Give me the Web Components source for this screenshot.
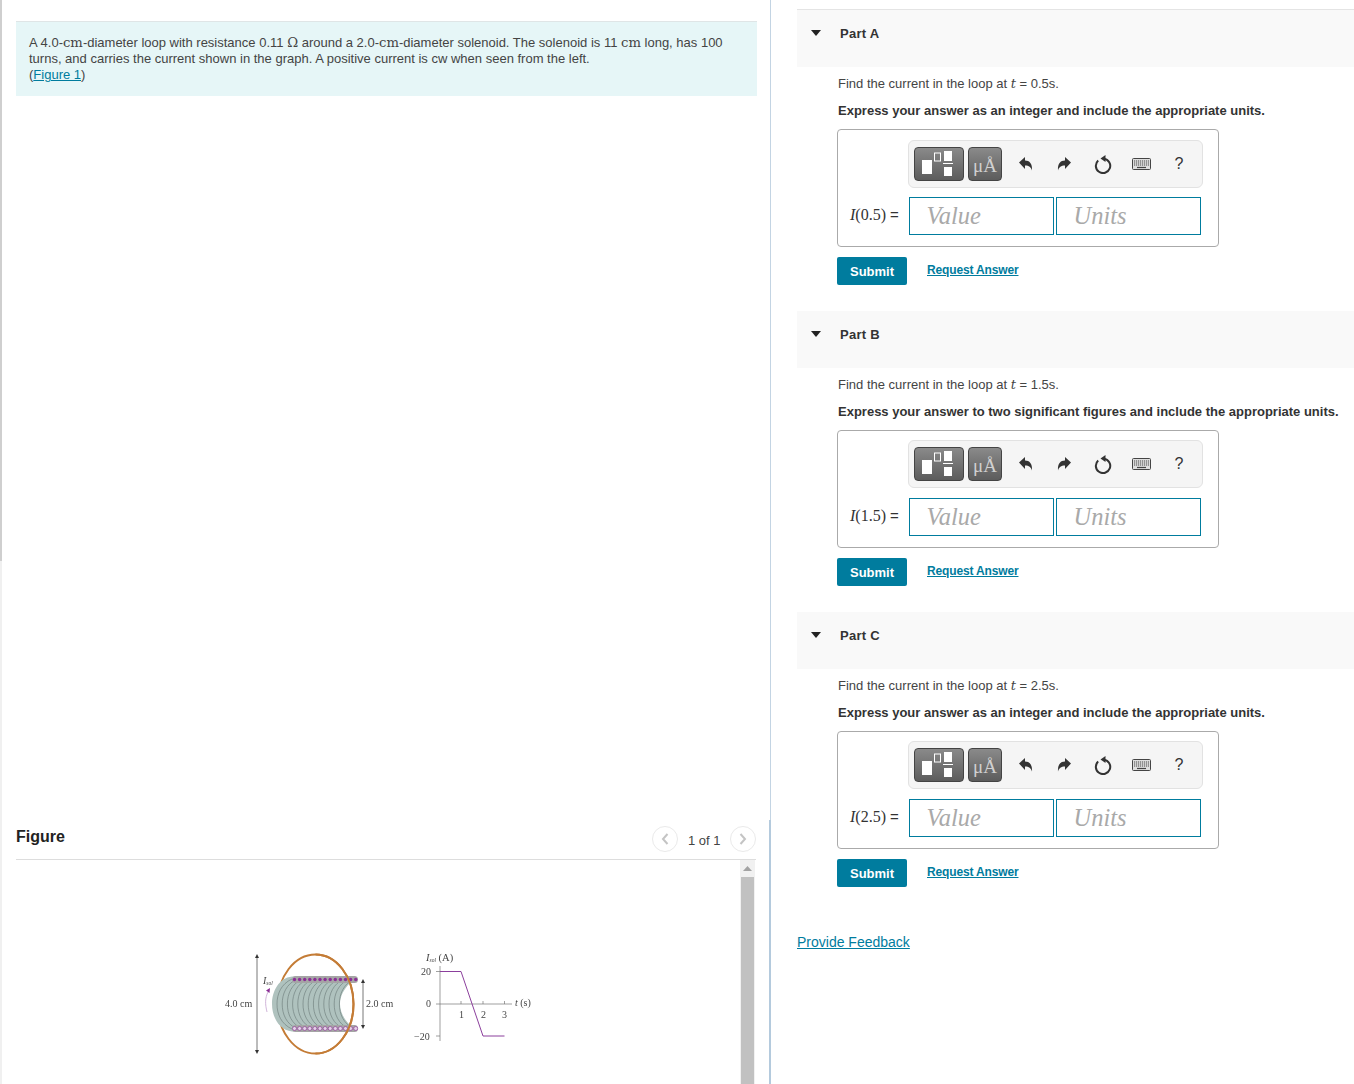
<!DOCTYPE html>
<html lang="en">
<head>
<meta charset="utf-8">
<title>Part A</title>
<style>
  html, body { margin: 0; height: 100%; }
  body { font-family: "Liberation Sans", Arial, sans-serif; color: #333; background: #fff; overflow: hidden; }
</style>
</head>
<body>
<mp-app>
  <mp-intro slot="left">A 4.0-<mp-m>cm</mp-m>-diameter loop with resistance 0.11 <mp-m>Ω</mp-m> around a 2.0-<mp-m>cm</mp-m>-diameter solenoid. The solenoid is 11 <mp-m>cm</mp-m> long, has 100<br>turns, and carries the current shown in the graph. A positive current is cw when seen from the left.</mp-intro>
  <mp-figure slot="left"></mp-figure>
  <mp-part slot="right" first label="Part A" time="0.5" instruction="Express your answer as an integer and include the appropriate units."></mp-part>
  <mp-part slot="right" label="Part B" time="1.5" instruction="Express your answer to two significant figures and include the appropriate units."></mp-part>
  <mp-part slot="right" label="Part C" time="2.5" instruction="Express your answer as an integer and include the appropriate units."></mp-part>
  <a slot="right" href="#" style="display:block;width:max-content;margin-top:21px;font-size:14px;line-height:18px;color:#007c9e">Provide Feedback</a>
</mp-app>
<script>
const TEAL = "#007c9e";

function define(tag, html, setup) {
  const template = document.createElement("template");
  template.innerHTML = html.trim();
  customElements.define(tag, class extends HTMLElement {
    constructor() {
      super();
      this.attachShadow({ mode: "open" }).append(template.content.cloneNode(true));
      if (setup) setup(this, this.shadowRoot);
    }
  });
}

define("mp-app", `
  <style>
    :host { display: flex; height: 100vh; box-sizing: border-box; overflow: hidden; }
    .left {
      box-sizing: border-box; width: 771px; flex: none; height: 100%;
      display: flex; flex-direction: column;
      padding: 21px 13px 0 16px;
      border-right: 1px solid #c3d4e3;
      position: relative;
    }
    .left::before { content: ""; position: absolute; left: 0; top: 0; bottom: 0; width: 2px; background: linear-gradient(#cfcfcf 561px, #f0f0f0 561px); }
    .left::after { content: ""; position: absolute; right: -1px; top: 820px; bottom: 0; width: 2px; background: #b4cadd; }
    .right { flex: 1; min-width: 0; padding: 9px 0 0 26px; }
  </style>
  <div class="left"><slot name="left"></slot></div>
  <div class="right"><slot name="right"></slot></div>
`);

define("mp-m", `
  <style>:host { display: inline; font-family: "DejaVu Serif", serif; font-size: 13.2px; }</style><slot></slot>
`);

define("mp-intro", `
  <style>
    :host {
      display: block; flex: none; box-sizing: border-box; height: 75px; width: 741px;
      padding: 13px 13px 0; background: #e6f6f7; border-top: 1px solid #dfe5e6;
      font-size: 13px; line-height: 16px; color: #444;
    }
    a { color: ${TEAL}; }
    div { width: 705px; }
  </style>
  <div><slot></slot><br>(<a href="#">Figure 1</a>)</div>
`);

define("mp-figure", `
  <style>
    :host { display: flex; flex-direction: column; margin-top: auto; flex: none; height: 263px; }
    header { display: flex; align-items: center; height: 38px; border-bottom: 1px solid #ddd; flex: none; width: 740px; }
    h2 { margin: 0; font-size: 16px; line-height: 20px; font-weight: bold; color: #222; flex: 1; position: relative; top: -3px; }
    .nav { display: flex; align-items: center; gap: 9.500px; position: relative; top: -1px; }
    .nav span { font-size: 13px; color: #444; position: relative; top: 1px; }
    button {
      box-sizing: border-box; width: 26px; height: 26px; border-radius: 50%; padding: 0; margin: 0;
      border: 1.5px solid #eaeaea; background: #fff; display: grid; place-items: center;
    }
    .view { flex: 1; display: flex; width: 739px; min-height: 0; }
    .canvas { flex: 1; position: relative; }
    .bar { width: 15px; background: #f1f1f1; display: flex; flex-direction: column; align-items: center; }
    .up { height: 17px; flex: none; display: grid; place-items: center; }
    .thumb { flex: 1; width: 13px; background: #c1c1c1; }
    svg.fig { position: absolute; left: 194px; top: 80px; filter: blur(.25px); }
    svg text { font-family: "Liberation Serif", serif; fill: #444; }
  </style>
  <header>
    <h2>Figure</h2>
    <div class="nav">
      <button aria-label="Previous"><svg width="10" height="14" viewBox="0 0 10 14"><path d="M7.500 2 3 7l4.500 5" fill="none" stroke="#c4c4c4" stroke-width="2"/></svg></button>
      <span>1 of 1</span>
      <button aria-label="Next"><svg width="10" height="14" viewBox="0 0 10 14"><path d="M2.500 2 7 7l-4.500 5" fill="none" stroke="#c4c4c4" stroke-width="2"/></svg></button>
    </div>
  </header>
  <div class="view">
    <div class="canvas">
      <svg class="fig" width="330" height="130" viewBox="210 940 330 130">
        <defs>
          <marker id="ah" markerWidth="5" markerHeight="5" refX="2.500" refY="2.500" orient="auto-start-reverse"><path d="M0 0 5 2.500 0 5z" fill="#333"/></marker>
        </defs>
        <line x1="257" y1="956" x2="257" y2="1052" stroke="#555" stroke-width=".8" marker-start="url(#ah)" marker-end="url(#ah)"/>
        <text x="225" y="1007" font-size="10">4.0 cm</text>
        <line x1="363" y1="981" x2="363" y2="1027" stroke="#555" stroke-width=".8" marker-start="url(#ah)" marker-end="url(#ah)"/>
        <text x="366" y="1007" font-size="10">2.0 cm</text>
        <text x="263" y="984" font-size="10" font-style="italic">I<tspan font-size="5.500" dy="1">sol</tspan></text>
        <path d="M267 1012C265 1004 265 998 268 992" fill="none" stroke="#c5a3d0" stroke-width=".8"/>
        <path d="M266 990.500 270 988 269.500 993z" fill="#8b2f96"/>
        <ellipse cx="315.500" cy="1004" rx="38" ry="49.500" fill="none" stroke="#c47c36" stroke-width="2"/>
        <path d="M292 976.500C279 978 272 991 272 1004C272 1017 279 1030 292 1031.500H350V1025C344 1019 340 1012 340 1004C340 996 344 989 350 983V976.500Z" fill="#afc2be"/>
        <g fill="none" stroke="#6a7877" stroke-width=".6" id="turns"></g>
        <rect x="292" y="976" width="66" height="7" rx="3.500" fill="#a5a5a5"/>
        <rect x="292" y="1025" width="66" height="7" rx="3.500" fill="#a5a5a5"/>
        <g id="dots"></g>
        <path d="M315.500 954.500A38 49.500 0 0 1 315.500 1053.500" fill="none" stroke="#c47c36" stroke-width="2"/>
        <text x="426" y="961" font-size="10.500" font-style="italic">I<tspan font-size="5.500" dy="1">sol</tspan><tspan font-style="normal" font-size="10.500" dy="-1"> (A)</tspan></text>
        <g stroke="#777" stroke-width=".7">
          <line x1="440" y1="966" x2="440" y2="1041"/>
          <line x1="436" y1="1004" x2="512" y2="1004"/>
          <line x1="436" y1="971.500" x2="440" y2="971.500"/>
          <line x1="436" y1="1036" x2="440" y2="1036"/>
          <line x1="461" y1="1001" x2="461" y2="1004"/>
          <line x1="483" y1="1001" x2="483" y2="1004"/>
          <line x1="504.500" y1="1001" x2="504.500" y2="1004"/>
        </g>
        <path d="M440 971.500H461L483 1036H504.500" fill="none" stroke="#8b3f9c" stroke-width="1"/>
        <g font-size="10">
          <text x="421" y="975">20</text>
          <text x="426" y="1007">0</text>
          <text x="414" y="1039.500">−20</text>
          <text x="459" y="1018">1</text>
          <text x="481" y="1018">2</text>
          <text x="502" y="1018">3</text>
          <text x="515" y="1006"><tspan font-style="italic">t</tspan> (s)</text>
        </g>
      </svg>
    </div>
    <div class="bar">
      <div class="up"><svg width="9" height="5" viewBox="0 0 9 5"><path d="M4.500 0 9 5H0z" fill="#a3a3a3"/></svg></div>
      <div class="thumb"></div>
    </div>
  </div>
`, (host, root) => {
  const ns = "http://www.w3.org/2000/svg";
  const turns = root.getElementById("turns");
  for (let i = 0; i < 13; i++) {
    const x = 277 + i * 5.200;
    const p = document.createElementNS(ns, "path");
    p.setAttribute("d", `M${x + 15} 979C${x + 4} 984 ${x} 994 ${x} 1004C${x} 1014 ${x + 4} 1024 ${x + 15} 1029`);
    turns.append(p);
  }
  const dots = root.getElementById("dots");
  for (let i = 0; i < 13; i++) {
    const x = 294.500 + i * 5.100;
    const top = document.createElementNS(ns, "circle");
    top.setAttribute("cx", x); top.setAttribute("cy", 979.500); top.setAttribute("r", 1.700);
    top.setAttribute("fill", "#8b2f96");
    const bottom = document.createElementNS(ns, "circle");
    bottom.setAttribute("cx", x); bottom.setAttribute("cy", 1028.500); bottom.setAttribute("r", 2);
    bottom.setAttribute("fill", "#e4d3e8"); bottom.setAttribute("stroke", "#8b2f96"); bottom.setAttribute("stroke-width", ".6");
    dots.append(top, bottom);
  }
});

define("mp-toolbar", `
  <style>
    :host {
      display: flex; align-items: center; box-sizing: border-box; width: 295px; height: 48px;
      background: #f5f5f5; border: 1px solid #e2e2e2; border-radius: 6px; padding-left: 5px;
    }
    .tpl {
      box-sizing: border-box; height: 34px; border: 1px solid #444; border-radius: 4px;
      background: linear-gradient(#8a8a8a, #5c5c5c); display: grid; place-items: center; flex: none;
    }
    .a { width: 50px; margin-right: 4px; }
    .b { width: 34px; font: 19px "Liberation Serif", serif; color: #d0d0d0; padding-top: 3px; }
    .icon { flex: none; display: grid; place-items: center; height: 34px; }
    .q { font-size: 16px; color: #333; }
  </style>
  <div class="tpl a"><svg width="48" height="32" viewBox="0 0 48 32">
    <rect x="7" y="12" width="10" height="14" fill="#fff"/>
    <rect x="19.500" y="5" width="6" height="8" fill="none" stroke="#fff"/>
    <rect x="29" y="3" width="8" height="10" fill="#fff"/>
    <rect x="28" y="15" width="10" height="1" fill="#fff"/>
    <rect x="29" y="19" width="8" height="9" fill="#fff"/>
  </svg></div>
  <div class="tpl b">μÅ</div>
  <div class="icon" style="width:20px;margin-left:14px"><svg width="16" height="16" viewBox="0 0 16 16"><path d="M1 6.500 7 1v3.500c4.500 0 7.500 3 7 10-1-3.500-3-5-7-5V13z" fill="#333"/></svg></div>
  <div class="icon" style="width:20px;margin-left:18px"><svg width="16" height="16" viewBox="0 0 16 16"><path d="M15 6.500 9 1v3.500c-4.500 0-7.500 3-7 10 1-3.500 3-5 7-5V13z" fill="#333"/></svg></div>
  <div class="icon" style="width:20px;margin-left:19px"><svg width="18" height="20" viewBox="0 0 18 20"><path d="M4.200 6.500A7.200 7.200 0 1 0 10 4.700" fill="none" stroke="#333" stroke-width="2"/><path d="M6.500 4.500 11.500 1v7z" fill="#333"/></svg></div>
  <div class="icon" style="width:20px;margin-left:18px"><svg width="19" height="12" viewBox="0 0 19 12"><rect x=".5" y=".5" width="18" height="11" rx="1" fill="#dedede" stroke="#444"/><path d="M2 3h15M2 5h15M2 7h15" stroke="#444" stroke-dasharray="1.200 .8"/><path d="M5 9.500h9" stroke="#444" stroke-width="1.200"/></svg></div>
  <div class="icon q" style="width:14px;margin-left:21px">?</div>
`);

define("mp-field", `
  <style>
    :host {
      display: flex; align-items: center; box-sizing: border-box; width: 145px; height: 38px;
      border: 1px solid ${TEAL}; background: #fff; padding-left: 16.500px;
      font: italic 24.500px "Liberation Serif", serif; color: #a9a9a9;
    }
  </style>
  <slot></slot>
`);

define("mp-part", `
  <style>
    :host { display: block; }
    .head {
      box-sizing: border-box; height: 58px; background: #f9f9f9; border-top: 1px solid transparent;
      display: flex; align-items: flex-start; padding: 16px 0 0 14px;
      font-size: 13px; line-height: 16px; font-weight: bold; letter-spacing: .25px; color: #333; background-clip: padding-box;
    }
    :host([first]) .head { border-top-color: #e4e4e4; }
    .tri { width: 0; height: 0; border: 5.500px solid transparent; border-top: 6px solid #222; border-bottom: 0; margin: 4px 18px 0 0; }
    .label { padding-left: 1px; }
    .body { padding: 0 0 0 40px; }
    p { margin: 0; font-size: 13px; line-height: 16px; color: #444; }
    .find { padding-top: 9px; padding-left: 1px; }
    .find i { font-family: "DejaVu Serif", serif; font-size: 13px; line-height: 0; }
    .how { padding-top: 11px; font-weight: bold; color: #333; white-space: nowrap; padding-left: 1px; }
    .box {
      box-sizing: border-box; width: 382px; height: 118px; margin-top: 10px;
      border: 1px solid #aaa; border-radius: 4px; padding: 9px 0 0 70px;
    }
    :host([first]) .box { padding-top: 10px; }
    .row { display: flex; align-items: center; margin-top: 10px; margin-left: -58px; }
    :host([first]) .row { margin-top: 9px; }
    .eq { width: 59px; flex: none; font: 16px "Liberation Serif", serif; color: #333; position: relative; top: -1px; white-space: nowrap; }
    .eq small { font: 15px "Liberation Sans", sans-serif; }
    .fields { display: flex; gap: 2px; }
    .actions { display: flex; align-items: center; margin-top: 10px; height: 28px; }
    button {
      width: 70px; height: 28px; border: 0; border-radius: 2px; padding: 0; background: ${TEAL}; color: #fff;
      font: bold 13px "Liberation Sans", sans-serif;
    }
    .actions a { margin-left: 20px; font-size: 12px; font-weight: bold; letter-spacing: -.15px; color: ${TEAL}; position: relative; top: -1px; }
    .gap { height: 25px; }
  </style>
  <div class="head"><span class="tri"></span><span class="label"></span></div>
  <div class="body">
    <p class="find">Find the current in the loop at <i>t</i> = <span class="t"></span>s.</p>
    <p class="how"></p>
    <div class="box">
      <mp-toolbar></mp-toolbar>
      <div class="row">
        <div class="eq"><i>I</i>(<span class="t"></span>) <small>=</small></div>
        <div class="fields"><mp-field>Value</mp-field><mp-field>Units</mp-field></div>
      </div>
    </div>
    <div class="actions"><button>Submit</button><a href="#">Request Answer</a></div>
    <div class="gap"></div>
  </div>
`, (host, root) => {
  root.querySelector(".label").textContent = host.getAttribute("label");
  root.querySelector(".how").textContent = host.getAttribute("instruction");
  root.querySelectorAll(".t").forEach((n) => { n.textContent = host.getAttribute("time"); });
});
</script>
</body>
</html>
